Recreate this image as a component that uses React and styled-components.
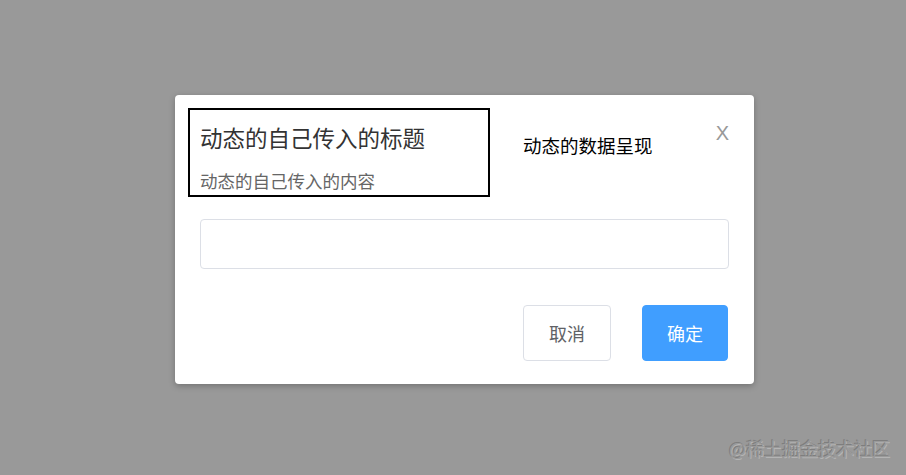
import styled, { createGlobalStyle } from 'styled-components'

const GlobalStyle = createGlobalStyle`
    html, body {
        margin: 0;
        padding: 0;
        height: 100%;
    }
    body {
        font-family: "Noto Sans CJK SC", "Noto Sans", sans-serif;
        background: #999999;
    }
    #root {
        height: 100%;
    }
`;

const Mask = styled.div`
    position: relative;
    height: 475px;
    display: flex;
    align-items: flex-start;
    padding: 95px 0 0 175px;
    box-sizing: border-box;
    background: #999999;
`;

const Dialog = styled.div`
    width: 579px;
    height: 289px;
    box-sizing: border-box;
    background: #fff;
    border-radius: 4px;
    box-shadow: 0 2px 6px rgba(0, 0, 0, 0.25);
    display: flex;
    flex-direction: column;
`;

const Header = styled.div`
    display: flex;
    align-items: flex-start;
    padding: 13px 25px 0 13px;
`;

const Slot = styled.div`
    width: 302px;
    height: 89px;
    box-sizing: border-box;
    border: 2px solid #000;
    padding: 0 10px;
`;

const Title = styled.div`
    font-size: 22.5px;
    line-height: 30px;
    color: #333;
    margin-top: 12px;
`;

const Content = styled.div`
    font-size: 17.5px;
    line-height: 24px;
    color: #666;
    margin-top: 17px;
`;

const Data = styled.div`
    font-size: 18.5px;
    line-height: 26px;
    color: #000;
    margin: 24px 0 0 33px;
    flex: 1;
`;

const Close = styled.span`
    font-family: "Liberation Sans", Arial, sans-serif;
    font-size: 20px;
    line-height: 24px;
    color: #999;
    margin-top: 13px;
    cursor: pointer;
`;

const Body = styled.div`
    padding: 22px 25px 0 25px;
`;

const Input = styled.input`
    display: block;
    width: 100%;
    height: 50px;
    box-sizing: border-box;
    border: 1px solid #dcdfe6;
    border-radius: 4px;
    outline: none;
    padding: 0 12px;
    font-size: 16px;
`;

const Footer = styled.div`
    display: flex;
    justify-content: flex-end;
    gap: 31px;
    padding: 36px 26px 0 0;
`;

const Button = styled.button`
    width: ${p => p.$w}px;
    height: 56px;
    box-sizing: border-box;
    border-radius: 4px;
    font-family: "Noto Sans CJK SC", sans-serif;
    font-size: 18px;
    cursor: pointer;
    border: 1px solid ${p => (p.$primary ? '#409eff' : '#dcdfe6')};
    background: ${p => (p.$primary ? '#409eff' : '#fff')};
    color: ${p => (p.$primary ? '#fff' : '#606266')};
`;

const Watermark = styled.div`
    position: absolute;
    right: 16px;
    bottom: 15px;
    font-size: 18px;
    line-height: 24px;
    color: #9a9a9a;
    text-shadow: -1px -1px 0 #7e7e7e, 1px 1px 0 #b4b4b4;
`;

export default function App() {
    return (
        <>
            <GlobalStyle />
            <Mask>
                <Dialog>
                    <Header>
                        <Slot>
                            <Title>动态的自己传入的标题</Title>
                            <Content>动态的自己传入的内容</Content>
                        </Slot>
                        <Data>动态的数据呈现</Data>
                        <Close>X</Close>
                    </Header>
                    <Body>
                        <Input />
                    </Body>
                    <Footer>
                        <Button $w={88}>取消</Button>
                        <Button $w={86} $primary>确定</Button>
                    </Footer>
                </Dialog>
                <Watermark>@稀土掘金技术社区</Watermark>
            </Mask>
        </>
    )
}
